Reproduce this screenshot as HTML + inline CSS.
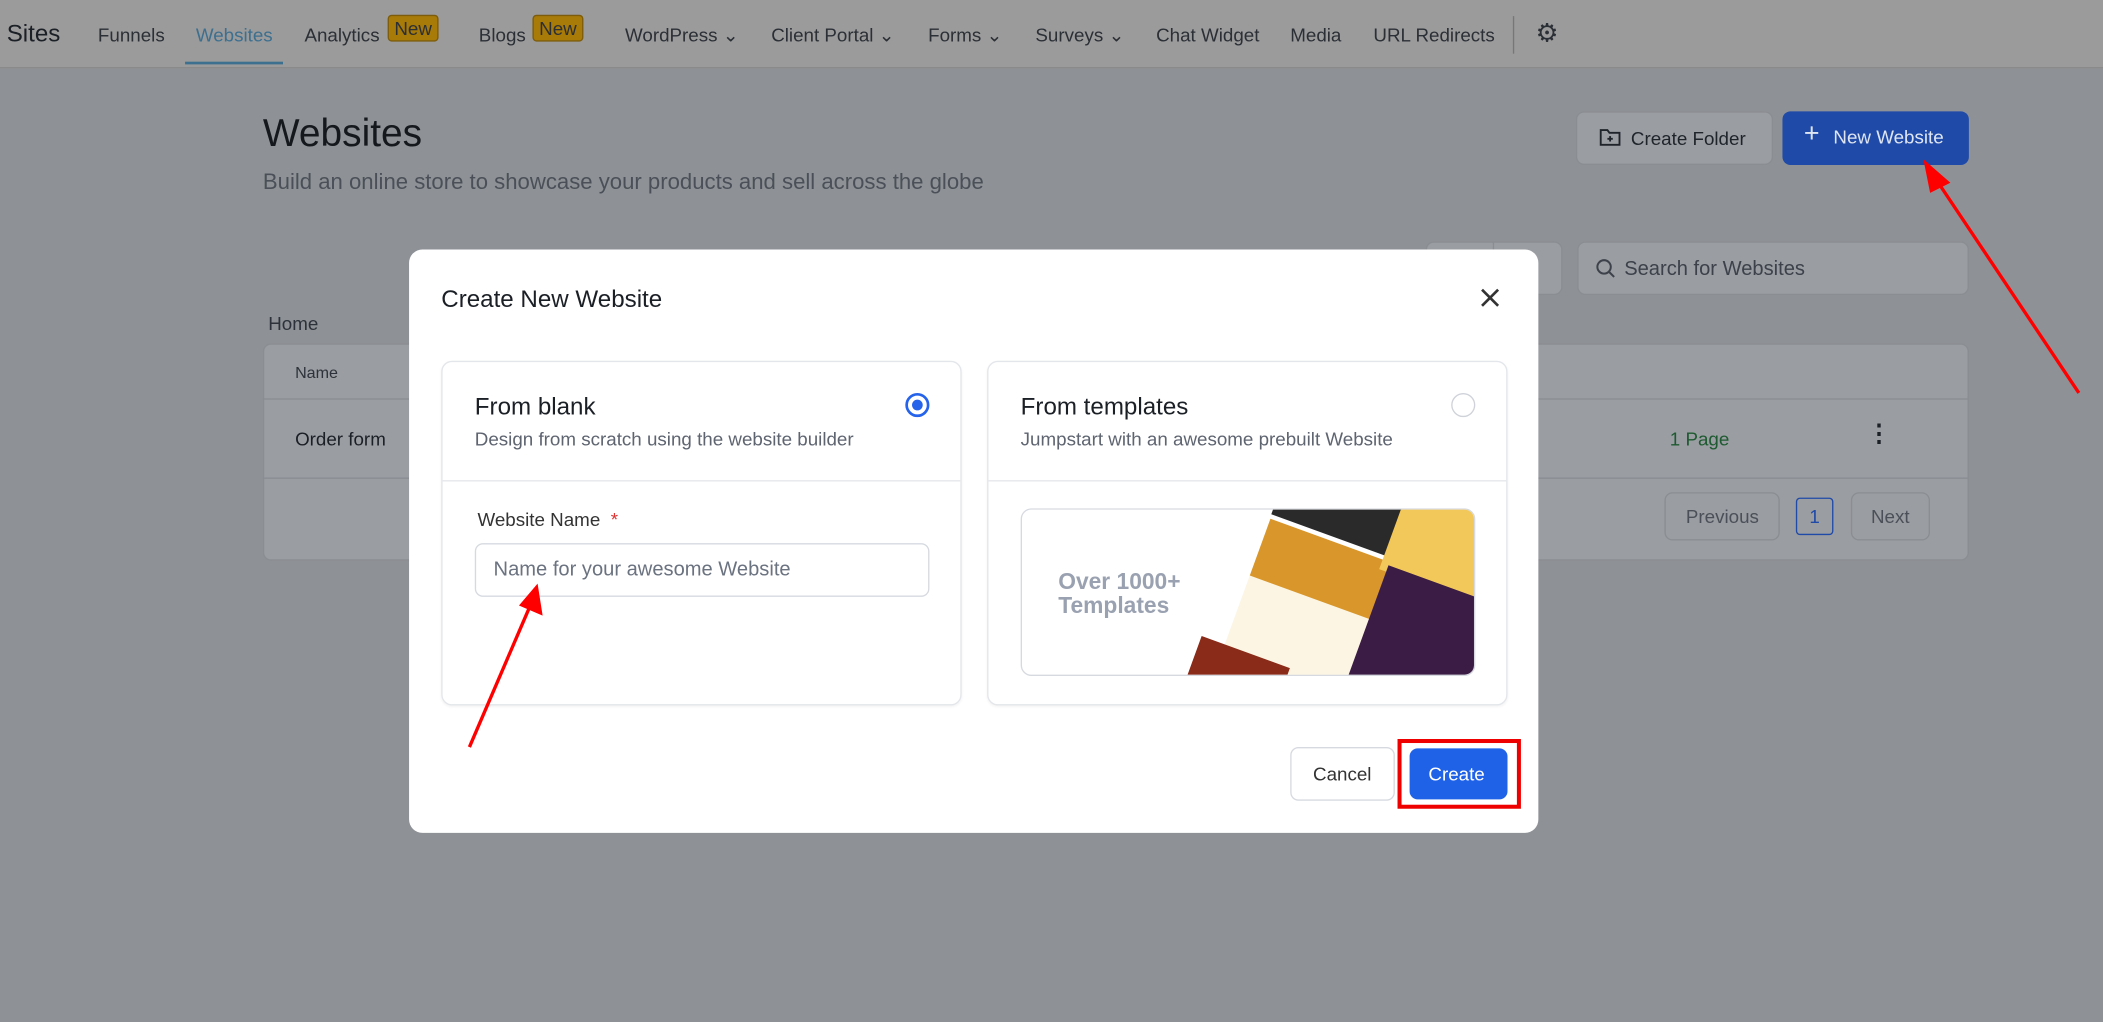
<!DOCTYPE html>
<html><head><meta charset="utf-8"><style>
*{box-sizing:border-box;margin:0;padding:0}
html,body{width:2103px;height:1022px;overflow:hidden;background:#8e9297;font-family:"Liberation Sans",sans-serif}
#w{width:1568px;height:762px;transform:scale(1.34120);transform-origin:0 0;position:relative}
.a{position:absolute}
.nav{left:0;top:0;width:1568px;height:51px;background:#9b9b9b;border-bottom:1px solid #8a8a8a}
.nav span{position:absolute;top:18px;font-size:14px;color:#2b2f36}
.new{background:#a87a08;color:#1a1a1a;font-size:11px;padding:1px 4px;border-radius:3px;border:1px solid #7d5c0c}
.card{background:#9a9da2;border:1px solid #8a8d92;border-radius:6px}
.modal{left:305px;top:186px;width:842px;height:435px;background:#fff;border-radius:10px}
.opt{border:1px solid #e3e6ea;border-radius:8px;background:#fff;box-shadow:0 1px 2px rgba(0,0,0,.05)}
</style></head><body><div id="w">
<div class="a nav">
<span style="left:5px;top:15px;font-size:18px;color:#1b1f26">Sites</span>
<span style="left:73px">Funnels</span>
<span style="left:146px;color:#3d6f8f">Websites</span>
<div class="a" style="left:138px;top:46px;width:73px;height:2px;background:#3d6f8f"></div>
<span style="left:227px">Analytics</span><span class="new" style="left:289px;top:11px">New</span>
<span style="left:357px">Blogs</span><span class="new" style="left:397px;top:11px">New</span>
<span style="left:466px">WordPress ⌄</span>
<span style="left:575px">Client Portal ⌄</span>
<span style="left:692px">Forms ⌄</span>
<span style="left:772px">Surveys ⌄</span>
<span style="left:862px">Chat Widget</span>
<span style="left:962px">Media</span>
<span style="left:1024px">URL Redirects</span>
<div class="a" style="left:1128px;top:12px;width:1px;height:28px;background:#777"></div>
<span style="left:1145px;top:14px;font-size:19px">⚙</span>
</div>
<div class="a" style="left:196px;top:84px;font-size:29px;color:#15181d">Websites</div>
<div class="a" style="left:196px;top:127px;font-size:16.5px;color:#4b5058">Build an online store to showcase your products and sell across the globe</div>
<div class="a card" style="left:1175px;top:83px;width:147px;height:40px;font-size:14px;color:#1f242b;padding:11px 0 0 40px">Create Folder</div>
<svg class="a" style="left:1192px;top:94px" width="17" height="16" viewBox="0 0 17 16" fill="none" stroke="#1f242b" stroke-width="1.4"><path d="M1.5 3h5l1.5 2h7.5v9h-14z"/><path d="M8.5 7.5v4M6.5 9.5h4"/></svg>
<div class="a" style="left:1329px;top:83px;width:139px;height:40px;background:#1f4aa8;border-radius:6px;color:#dfe6f3;font-size:14px;padding:11px 0 0 38px">New Website</div>
<div class="a" style="left:1345px;top:89px;color:#dfe6f3;font-size:20px">+</div>
<div class="a card" style="left:1063px;top:180px;width:102px;height:40px"></div>
<div class="a" style="left:1113px;top:180px;width:1px;height:40px;background:#8a8d92"></div>
<div class="a card" style="left:1176px;top:180px;width:292px;height:40px;font-size:15px;color:#3c414a;padding:11px 0 0 34px">Search for Websites</div>
<svg class="a" style="left:1189px;top:192px" width="16" height="16" fill="none" stroke="#3c414a" stroke-width="1.5"><circle cx="7" cy="7" r="5"/><path d="M11 11l3.5 3.5"/></svg>
<div class="a" style="left:200px;top:233px;font-size:14px;color:#2d323a">Home</div>
<div class="a card" style="left:196px;top:256px;width:1272px;height:162px"></div>
<div class="a" style="left:196px;top:297px;width:1272px;height:1px;background:#8a8d92"></div>
<div class="a" style="left:196px;top:356px;width:1272px;height:1px;background:#8a8d92"></div>
<div class="a" style="left:220px;top:271px;font-size:12px;color:#2d323a">Name</div>
<div class="a" style="left:220px;top:319px;font-size:14px;color:#1b1f26">Order form</div>
<div class="a" style="left:1245px;top:319px;font-size:14px;color:#1d5a30">1 Page</div>
<div class="a" style="left:1392px;top:313px;font-size:18px;color:#1b1f26;font-weight:bold">⋮</div>
<div class="a card" style="left:1241px;top:367px;width:86px;height:36px;font-size:14px;color:#4b5058;padding:9px 0 0 15px">Previous</div>
<div class="a" style="left:1339px;top:371px;width:28px;height:28px;border:1px solid #1f4aa8;border-radius:3px;font-size:14px;color:#1f4aa8;text-align:center;padding-top:5px">1</div>
<div class="a card" style="left:1380px;top:367px;width:59px;height:36px;font-size:14px;color:#4b5058;padding:9px 0 0 14px">Next</div>

<div class="a modal">
<div class="a" style="left:24px;top:27px;font-size:18px;color:#1b1f26">Create New Website</div>
<svg class="a" style="left:799px;top:29px" width="14" height="14" stroke="#333" stroke-width="2"><path d="M1 1l12 12M13 1L1 13"/></svg>
<div class="a opt" style="left:24px;top:83px;width:388px;height:257px">
 <div class="a" style="left:24px;top:23px;font-size:18px;color:#1b1f26">From blank</div>
 <div class="a" style="left:24px;top:49px;font-size:14px;color:#5e6470">Design from scratch using the website builder</div>
 <div class="a" style="left:345px;top:23px;width:18px;height:18px;border:2px solid #2563eb;border-radius:50%"><div style="margin:3px;width:8px;height:8px;background:#2563eb;border-radius:50%"></div></div>
 <div class="a" style="left:0;top:88px;width:386px;height:1px;background:#e5e7eb"></div>
 <div class="a" style="left:26px;top:109px;font-size:14px;color:#333">Website Name <span style="color:#d33">&nbsp;*</span></div>
 <div class="a" style="left:24px;top:135px;width:339px;height:40px;border:1px solid #d6dae0;border-radius:6px;font-size:15px;color:#6b7280;padding:10px 0 0 13px">Name for your awesome Website</div>
</div>
<div class="a opt" style="left:431px;top:83px;width:388px;height:257px">
 <div class="a" style="left:24px;top:23px;font-size:18px;color:#1b1f26">From templates</div>
 <div class="a" style="left:24px;top:49px;font-size:14px;color:#5e6470">Jumpstart with an awesome prebuilt Website</div>
 <div class="a" style="left:345px;top:23px;width:18px;height:18px;border:1px solid #cfd3d9;border-radius:50%"></div>
 <div class="a" style="left:0;top:88px;width:386px;height:1px;background:#e5e7eb"></div>
 <div class="a" style="left:24px;top:109px;width:339px;height:125px;border:1px solid #d6dae0;border-radius:8px;overflow:hidden;background:#fff">
  <div class="a" style="left:27px;top:45px;font-size:17px;font-weight:bold;color:#9aa2b1;line-height:18px">Over 1000+<br>Templates</div>
  <div class="a" style="left:190px;top:-20px;width:90px;height:40px;background:#2a2a2a;transform:rotate(20deg)"></div>
  <div class="a" style="left:160px;top:20px;width:100px;height:130px;background:#fcf5e3;transform:rotate(20deg)"><div style="height:45px;background:#d9962a"></div></div>
  <div class="a" style="left:275px;top:-5px;width:80px;height:65px;background:#f3c85a;transform:rotate(20deg)"></div>
  <div class="a" style="left:255px;top:55px;width:95px;height:90px;background:#3b1c44;transform:rotate(20deg)"></div>
  <div class="a" style="left:125px;top:105px;width:70px;height:40px;background:#8a2a18;transform:rotate(20deg)"></div>
 </div>
</div>
<div class="a" style="left:657px;top:371px;width:78px;height:40px;border:1px solid #d6dae0;border-radius:6px;font-size:14px;color:#333;padding:11px 0 0 16px">Cancel</div>
<div class="a" style="left:737px;top:365px;width:92px;height:52px;border:3px solid #e00"></div>
<div class="a" style="left:746px;top:372px;width:73px;height:38px;background:#1f62e8;border-radius:6px;font-size:14px;color:#fff;padding:11px 0 0 14px">Create</div>
</div>
<svg class="a" style="left:0;top:0" width="1568" height="762">
<g stroke="#f00" stroke-width="2.5" fill="#f00">
<line x1="1550" y1="293" x2="1443" y2="133"/><polygon points="1436,122 1452,136 1440,142"/>
<line x1="350" y1="557" x2="396" y2="450"/><polygon points="400,438 403,457 389,451"/>
</g></svg>
</div></body></html>
